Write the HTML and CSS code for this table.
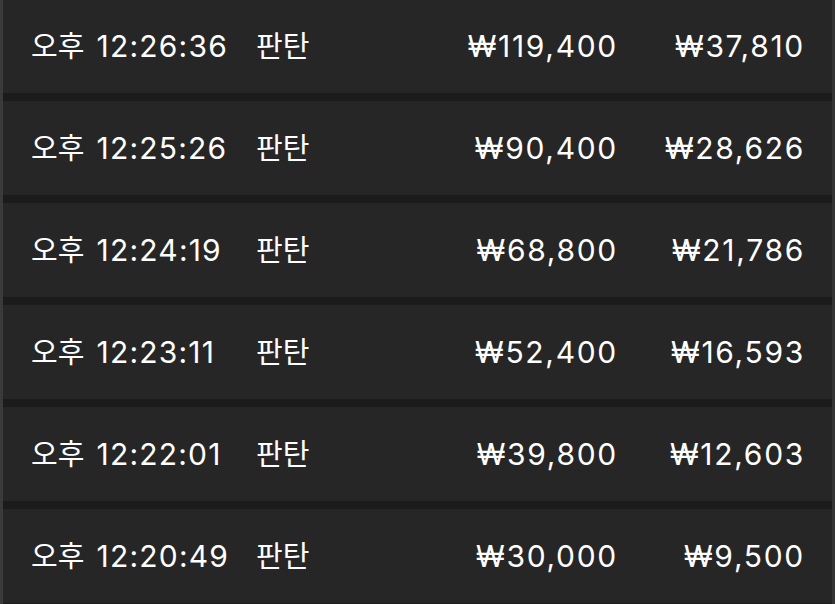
FILE: index.html
```html
<!DOCTYPE html>
<html lang="ko">
<head>
<meta charset="utf-8">
<link rel="stylesheet" href="styles.css">
</head>
<body>
<div class="list">
  <div class="row"><span class="time">오후 <span class="num clock">12:26:36</span></span><span class="tag">판탄</span><span class="amount num">₩119,400</span><span class="fee num">₩37,810</span></div>
  <div class="row"><span class="time">오후 <span class="num clock">12:25:26</span></span><span class="tag">판탄</span><span class="amount num">₩90,400</span><span class="fee num">₩28,626</span></div>
  <div class="row"><span class="time">오후 <span class="num clock">12:24:19</span></span><span class="tag">판탄</span><span class="amount num">₩68,800</span><span class="fee num">₩21,786</span></div>
  <div class="row"><span class="time">오후 <span class="num clock">12:23:11</span></span><span class="tag">판탄</span><span class="amount num">₩52,400</span><span class="fee num">₩16,593</span></div>
  <div class="row"><span class="time">오후 <span class="num clock">12:22:01</span></span><span class="tag">판탄</span><span class="amount num">₩39,800</span><span class="fee num">₩12,603</span></div>
  <div class="row"><span class="time">오후 <span class="num clock">12:20:49</span></span><span class="tag">판탄</span><span class="amount num">₩30,000</span><span class="fee num">₩9,500</span></div>
</div>
</body>
</html>
```
FILE: styles.css
```css
html, body {
  margin: 0;
  padding: 0;
  background: #1b1b1b;
  overflow: hidden;
}
body {
  width: 835px;
  height: 604px;
  font-family: Inter, "Noto Sans CJK KR", sans-serif;
  color: #ffffff;
}
.list {
  display: flex;
  flex-direction: column;
  gap: 8px;
  margin-top: -1px;
  border-left: 3px solid #3a3a3a;
  border-right: 3px solid #343434;
  height: 620px;
}
.row {
  height: 94px;
  flex: 0 0 94px;
  background: #262626;
  display: grid;
  grid-template-columns: 225px 1fr auto 187px;
  align-items: center;
  padding: 0 27px 0 28px;
  font-size: 29px;
  line-height: 1;
}
.num {
  font-size: 30px;
  letter-spacing: 1.7px;
}
.clock {
  margin-left: 4px;
  letter-spacing: 1.2px;
}
.amount, .fee {
  text-align: right;
}
```
